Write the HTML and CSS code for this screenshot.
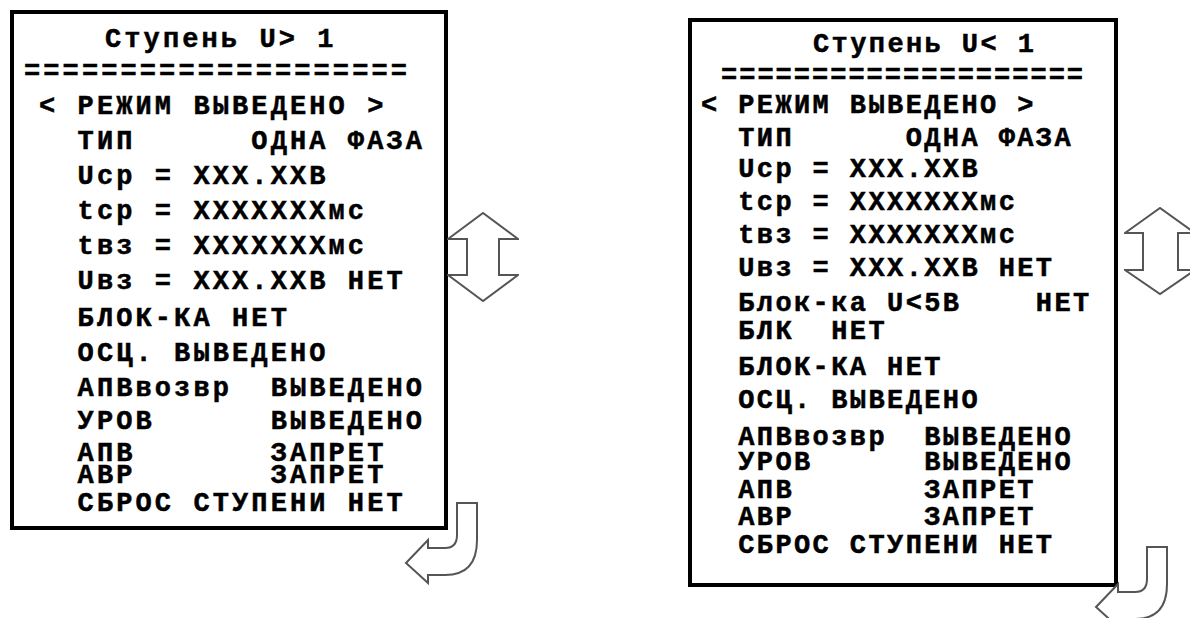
FILE: index.html
```html
<!DOCTYPE html>
<html lang="ru">
<head>
  <meta charset="UTF-8" />
  <meta name="viewport" content="width=device-width, initial-scale=1.0" />
  <title>Ступень U</title>
  <link rel="stylesheet" href="styles.css">
</head>
<body>
  <main class="page">

    <!-- Ступень U> 1 -->
    <section class="panel">
      <div class="screen screen-gt">
        <div class="title title-gt">Ступень U&gt; 1</div>
        <div class="rule rule-gt pull-3">====================</div>
        <div>&lt; РЕЖИМ ВЫВЕДЕНО &gt;</div>
        <div>  ТИП      ОДНА ФАЗА</div>
        <div>  Ucp = XXX.XXВ</div>
        <div>  tcp = XXXXXXXмс</div>
        <div>  tвз = XXXXXXXмс</div>
        <div>  Uвз = XXX.XXВ НЕТ</div>
        <div class="push-2">  БЛОК-КА НЕТ</div>
        <div>  ОСЦ. ВЫВЕДЕНО</div>
        <div>  АПВвозвр  ВЫВЕДЕНО</div>
        <div class="pull-2">  УРОВ      ВЫВЕДЕНО</div>
        <div class="pull-3">  АПВ       ЗАПРЕТ</div>
        <div class="pull-13">  АВР       ЗАПРЕТ</div>
        <div class="pull-7">  СБРОС СТУПЕНИ НЕТ</div>
      </div>
      <svg class="arrow updown updown-gt" viewBox="0 0 72 92">
        <path d="M1,27 L36,1 L71,27 L52,27 L52,63 L71,63 L36,89 L1,63 L20,63 L20,27 Z" />
      </svg>
      <svg class="arrow turn turn-gt" viewBox="0 0 76 86">
        <path d="M53,2 L73,2 L73,39 Q73,74 41,74 L24,74 L24,82 L2,62 L24,39 L24,47 L41,47 Q53,47 53,34 Z" />
      </svg>
    </section>

    <!-- Ступень U< 1 -->
    <section class="panel panel-lt">
      <div class="screen screen-lt">
        <div class="title title-lt">Ступень U&lt; 1</div>
        <div class="rule rule-lt pull-2">====================</div>
        <div class="pull-3">&lt; РЕЖИМ ВЫВЕДЕНО &gt;</div>
        <div>  ТИП      ОДНА ФАЗА</div>
        <div class="pull-2">  Ucp = XXX.XXВ</div>
        <div>  tcp = XXXXXXXмс</div>
        <div>  tвз = XXXXXXXмс</div>
        <div>  Uвз = XXX.XXВ НЕТ</div>
        <div class="push-2">  Блок-ка U&lt;5В    НЕТ</div>
        <div class="pull-5">  БЛК  НЕТ</div>
        <div class="push-3">  БЛОК-КА НЕТ</div>
        <div>  ОСЦ. ВЫВЕДЕНО</div>
        <div class="push-4">  АПВвозвр  ВЫВЕДЕНО</div>
        <div class="pull-8">  УРОВ      ВЫВЕДЕНО</div>
        <div class="pull-5">  АПВ       ЗАПРЕТ</div>
        <div class="pull-6">  АВР       ЗАПРЕТ</div>
        <div class="pull-5">  СБРОС СТУПЕНИ НЕТ</div>
      </div>
      <svg class="arrow updown updown-lt" viewBox="0 0 72 92">
        <path d="M1,26 L36,1 L71,26 L54,26 L54,63 L71,63 L36,87 L1,63 L19,63 L19,26 Z" />
      </svg>
      <svg class="arrow turn turn-lt" viewBox="0 0 76 86">
        <path d="M53,2 L73,2 L73,39 Q73,74 41,74 L24,74 L24,82 L2,62 L24,39 L24,47 L41,47 Q53,47 53,34 Z" />
      </svg>
    </section>

  </main>
</body>
</html>
```

FILE: styles.css
```css
* { box-sizing: border-box; }

html, body {
  height: 100%;
}

body {
  margin: 0;
  overflow: hidden;
  background: #fff;
  font-family: 'Liberation Mono', 'Courier New', monospace;
  font-weight: bold;
  color: #000;
}

.page {
  display: flex;
  align-items: flex-start;
  gap: 240px;
  height: 100%;
  padding: 10px 0 0 10px;
}

.panel {
  position: relative;
}

.panel-lt {
  margin-top: 8px;
}

/* screen frame */
.screen {
  border: 4px solid #000;
  font-size: 27px;
  -webkit-text-stroke: 0.5px #000;
}

.screen > div {
  white-space: pre;
}

.screen-gt {
  width: 438px;
  height: 520px;
  padding: 9px 0 0 25px;
  letter-spacing: 3.1px;
  line-height: 35px;
}

.screen-lt {
  width: 430px;
  height: 569px;
  padding: 7px 0 0 9px;
  letter-spacing: 2.4px;
  line-height: 33px;
}

.title-gt { margin-left: 66px; }
.title-lt { margin-left: 112px; }

.rule { letter-spacing: 2px; }
.rule-gt { margin-left: -15px; letter-spacing: 3.1px; }
.rule-lt { margin-left: 20px; }

/* line nudges */
.push-2 { margin-top: 2px; }
.push-3 { margin-top: 3px; }
.push-4 { margin-top: 4px; }
.pull-2 { margin-top: -2px; }
.pull-3 { margin-top: -3px; }
.pull-5 { margin-top: -5px; }
.pull-6 { margin-top: -6px; }
.pull-7 { margin-top: -7px; }
.pull-8 { margin-top: -8px; }
.pull-13 { margin-top: -13px; }

/* navigation arrows */
.arrow {
  position: absolute;
  fill: #fff;
  stroke: #555;
  stroke-width: 2;
  stroke-linejoin: miter;
}

.updown { width: 72px; height: 92px; }
.turn { width: 76px; height: 86px; }

.updown-gt { left: 437px; top: 202px; }
.turn-gt { left: 394px; top: 491px; }

.updown-lt { left: 436px; top: 189px; }
.turn-lt { left: 406px; top: 527px; }
```
